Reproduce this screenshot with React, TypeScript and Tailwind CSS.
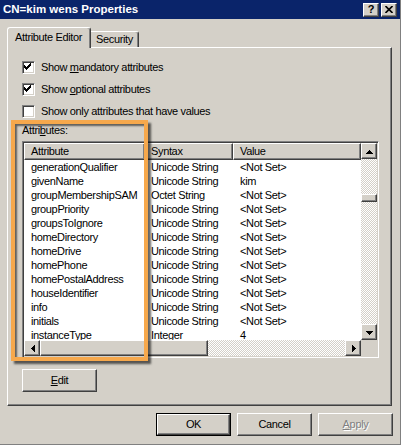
import React from 'react';

// classic 3D edges
const RAISED =
  'bg-[#d4d0c8] border border-t-white border-l-white border-r-[#404040] border-b-[#404040] shadow-[inset_-1px_-1px_#808080]';
const SUNKEN =
  'border border-t-[#808080] border-l-[#808080] border-r-white border-b-white shadow-[inset_1px_1px_#404040,inset_-1px_-1px_#d4d0c8]';
const TRACK =
  'bg-[repeating-conic-gradient(#d4d0c8_0_25%,#ffffff_0_50%)] bg-[length:2px_2px]';

const ROWS: [string, string, string][] = [
  ['generationQualifier', 'Unicode String', '<Not Set>'],
  ['givenName', 'Unicode String', 'kim'],
  ['groupMembershipSAM', 'Octet String', '<Not Set>'],
  ['groupPriority', 'Unicode String', '<Not Set>'],
  ['groupsToIgnore', 'Unicode String', '<Not Set>'],
  ['homeDirectory', 'Unicode String', '<Not Set>'],
  ['homeDrive', 'Unicode String', '<Not Set>'],
  ['homePhone', 'Unicode String', '<Not Set>'],
  ['homePostalAddress', 'Unicode String', '<Not Set>'],
  ['houseIdentifier', 'Unicode String', '<Not Set>'],
  ['info', 'Unicode String', '<Not Set>'],
  ['initials', 'Unicode String', '<Not Set>'],
  ['instanceType', 'Integer', '4'],
];

const Arrow = ({ dir }: { dir: 'up' | 'down' | 'left' | 'right' }) => {
  const rot = { up: 0, down: 180, left: 270, right: 90 }[dir];
  return (
    <svg width="7" height="7" viewBox="0 0 7 7" style={{ transform: `rotate(${rot}deg)` }} shapeRendering="crispEdges">
      <path d="M3 1.5h1v1h1v1h1v1h1v1H0v-1h1v-1h1v-1h1z" fill="#000" />
    </svg>
  );
};

const ScrollBtn = ({ dir }: { dir: 'up' | 'down' | 'left' | 'right' }) => (
  <div className={`${RAISED} w-[16px] h-[16px] flex items-center justify-center shrink-0`}>
    <Arrow dir={dir} />
  </div>
);

const CheckBox = ({ checked }: { checked: boolean }) => (
  <div className={`${SUNKEN} w-[13px] h-[13px] bg-white shrink-0 flex items-center justify-center`}>
    {checked && (
      <svg width="9" height="9" viewBox="0 0 9 9" shapeRendering="crispEdges">
        <path d="M0 2h1v1h1v1h1v-1h1v-1h1v-1h1v-1h1v3h-1v1h-1v1h-1v1h-1v1h-1v-1h-1v-1h-1v-1h-1z" fill="#000" />
      </svg>
    )}
  </div>
);

export default function App() {
  return (
    <div className="relative w-[401px] h-[445px] bg-[#d4d0c8] text-black text-[11px] tracking-[-0.35px] font-['Liberation_Sans',Arial,sans-serif] flex flex-col overflow-hidden border-r border-b border-[#808080]">
      {/* title bar */}
      <div className="h-[19px] bg-[#0a246a] flex items-center pl-[3px] pr-[3px] shrink-0 tracking-normal">
        <span className="text-white font-bold text-[11.5px] leading-none flex-1">CN=kim wens Properties</span>
        <div className="flex gap-[2px]">
          <div className={`${RAISED} w-[16px] h-[14px] flex items-center justify-center font-bold text-[11px] leading-none`}>?</div>
          <div className={`${RAISED} w-[16px] h-[14px] flex items-center justify-center`}>
            <svg width="8" height="7" viewBox="0 0 8 7">
              <path d="M0.5 0 L7.5 7 M7.5 0 L0.5 7" stroke="#000" strokeWidth="1.6" />
            </svg>
          </div>
        </div>
      </div>

      <div className="flex-1 pl-[7px] pt-[8px] flex flex-col">
        {/* tabs */}
        <div className="flex items-end h-[20px]">
          <div className="relative z-10 -mb-px h-[21px] w-[84px] bg-[#d4d0c8] border-l border-t border-white border-r border-r-[#404040] rounded-t-[3px] shadow-[inset_-1px_0_#808080] pl-[7px] pt-[3px] leading-[13px]">
            Attribute Editor
          </div>
          <div className="h-[16px] w-[48px] bg-[#d4d0c8] border-t border-white border-r border-r-[#404040] rounded-tr-[3px] shadow-[inset_-1px_0_#808080] pl-[5px] pt-[1px] leading-[13px]">
            Security
          </div>
        </div>

        {/* tab panel */}
        <div className={`${RAISED} w-[385px] h-[359px] pl-[14px] pt-[13px] flex flex-col`}>
          <div className="flex flex-col gap-[9px]">
            <label className="flex items-center gap-[6px] h-[13px] leading-[13px]">
              <CheckBox checked />
              <span>Show <u>m</u>andatory attributes</span>
            </label>
            <label className="flex items-center gap-[6px] h-[13px] leading-[13px]">
              <CheckBox checked />
              <span>Show <u>o</u>ptional attributes</span>
            </label>
            <label className="flex items-center gap-[6px] h-[13px] leading-[13px]">
              <CheckBox checked={false} />
              <span>Show only attributes that have values</span>
            </label>
          </div>

          <div className="mt-[6px] h-[13px] leading-[13px]">
            Attri<u>b</u>utes:
          </div>

          {/* list view */}
          <div className={`${SUNKEN} mt-[4px] w-[357px] h-[217px] p-px flex bg-white`}>
            <div className="w-[337px] flex flex-col">
              <div className="h-[197px] overflow-hidden bg-white">
                <div className="flex h-[17px]">
                  <div className={`${RAISED} w-[121px] pl-[6px] leading-[14px]`}>Attribute</div>
                  <div className={`${RAISED} w-[88px] pl-[5px] leading-[14px]`}>Syntax</div>
                  <div className={`${RAISED} flex-1 pl-[6px] leading-[14px]`}>Value</div>
                </div>
                {ROWS.map(([a, s, v]) => (
                  <div key={a} className="flex h-[14px] leading-[14px] whitespace-nowrap">
                    <div className="w-[121px] pl-[7px] overflow-hidden">{a}</div>
                    <div className="w-[88px] pl-[6px] overflow-hidden">{s}</div>
                    <div className="flex-1 pl-[7px] overflow-hidden">{v}</div>
                  </div>
                ))}
              </div>
              <div className="h-[16px] flex">
                <ScrollBtn dir="left" />
                <div className={`${RAISED} w-[168px] h-[16px]`} />
                <div className={`flex-1 ${TRACK}`} />
                <ScrollBtn dir="right" />
              </div>
            </div>
            <div className="w-[16px] flex flex-col">
              <div className="h-[197px] flex flex-col">
                <ScrollBtn dir="up" />
                <div className={`flex-1 ${TRACK} flex flex-col`}>
                  <div className={`${RAISED} mt-[35px] h-[8px]`} />
                </div>
                <ScrollBtn dir="down" />
              </div>
              <div className="h-[16px] bg-[#d4d0c8]" />
            </div>
          </div>

          <button className={`${RAISED} mt-[11px] w-[75px] h-[23px] flex items-center justify-center leading-none`}>
            <span><u>E</u>dit</span>
          </button>
        </div>

        {/* dialog buttons */}
        <div className="mt-[7px] flex justify-end gap-[6px] pr-[7px]">
          <div className="w-[75px] h-[23px] border border-black">
            <div className={`${RAISED} w-full h-full flex items-center justify-center leading-none`}>OK</div>
          </div>
          <div className={`${RAISED} w-[75px] h-[23px] flex items-center justify-center leading-none`}>Cancel</div>
          <div className={`${RAISED} w-[75px] h-[23px] flex items-center justify-center leading-none text-[#808080] [text-shadow:1px_1px_#ffffff]`}>
            <span><u>A</u>pply</span>
          </div>
        </div>
      </div>

      {/* highlight box drawn over the list */}
      <div className="absolute left-[11px] top-[120px] w-[137px] h-[241px] border-4 border-[#f6a84c] shadow-[3px_3px_2px_rgba(0,0,0,0.6),inset_2px_2px_2px_rgba(0,0,0,0.55)] pointer-events-none" />
    </div>
  );
}
